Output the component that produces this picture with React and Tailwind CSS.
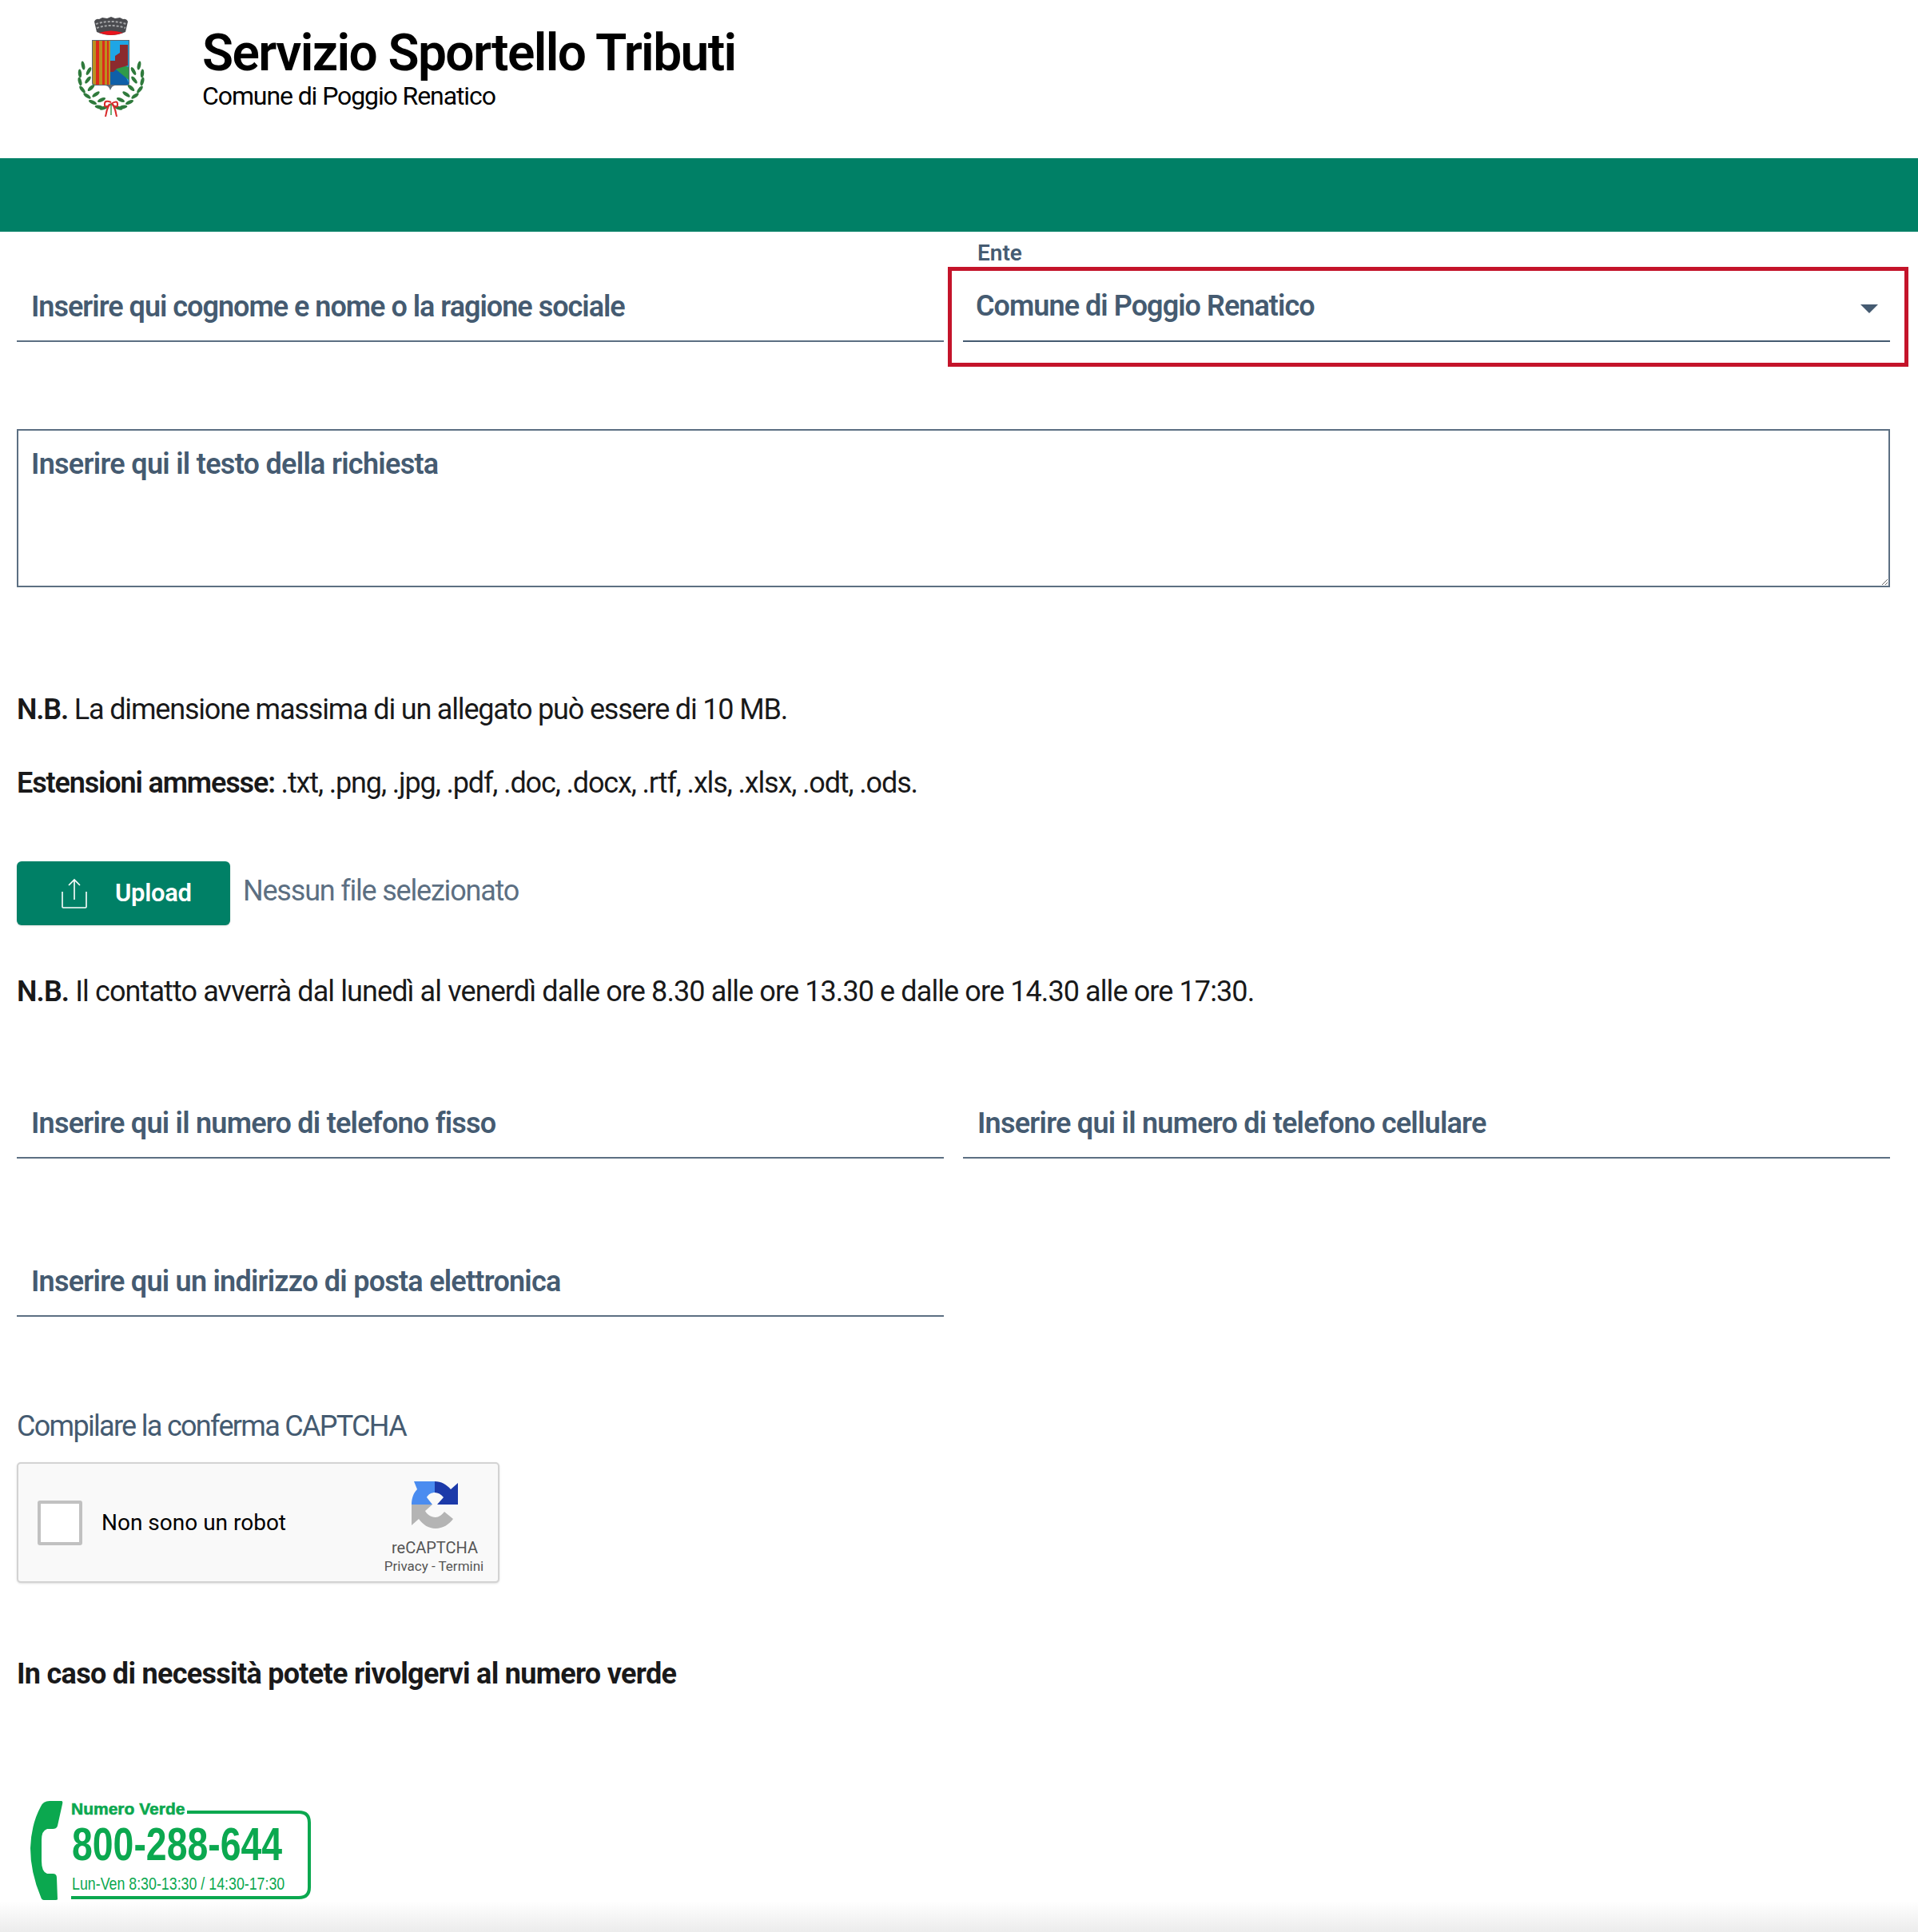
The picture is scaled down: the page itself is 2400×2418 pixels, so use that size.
const fontBody = { fontFamily: "Roboto, sans-serif" };

// leaves of the wreath on the crest, one branch, mirrored for the other side
const leaves = [
  [34, 72, -12], [30, 82, -5], [41, 79, 30], [30, 92, -15], [40, 90, 38], [33, 102, -38], [44, 100, 48],
  [39, 110, -55], [50, 108, 55], [46, 118, -65], [57, 115, 65], [54, 124, -78], [60, 125, 72],
];

const Crest = () => (
  <svg width="130" height="140" viewBox="0 0 130 140" className="shrink-0">
    <path d="M48 17 Q50 13 54 14 L58 12 L64 13 L69 11 L74 13 L80 12 L84 14 Q88 13 90 17 L87 30 Q69 38 51 30 Z" fill="#4a4b4f" />
    <path d="M50 20 Q69 14 88 20 M51 25 Q69 19 87 25" stroke="#a5a6a8" strokeWidth="2" fill="none" strokeDasharray="3 2" />
    <path d="M54 31 Q69 26 84 31 Q69 37 54 31 Z" fill="#e8141c" />
    <path d="M45 40 H92 V94 Q92 97 88 97 H74 Q70 97 68 103 Q66 97 62 97 H49 Q45 97 45 94 Z" fill="#5b6a78" />
    <path d="M46 41 H68 V96 H50 Q46 96 46 93 Z" fill="#b9911f" />
    <path d="M50 41 H54 V96 H50 Z M58 41 H61 V96 H58 Z M64 41 H66 V96 H64 Z" fill="#dc2a1c" />
    <path d="M68 41 H91 V93 Q91 96 87 96 H68 Z" fill="#1fa6e6" />
    <path d="M68 80 Q76 76 82 74 L91 94 V96 H68 Z" fill="#0f5fa8" />
    <path d="M74 76 Q84 70 91 74 V90 Z" fill="#2f9a4a" />
    <path d="M68 66 H74 V60 L80 56 V46 H90 V72 L76 76 L72 80 H68 Z" fill="#8c2a2e" />
    {leaves.map(([x, y, r], i) => (
      <g key={i}>
        <ellipse cx={x} cy={y} rx="2.2" ry="5.5" fill="#2f7a3c" transform={`rotate(${r} ${x} ${y})`} />
        <ellipse cx={138 - x} cy={y} rx="2.2" ry="5.5" fill="#2f7a3c" transform={`rotate(${-r} ${138 - x} ${y})`} />
      </g>
    ))}
    <path d="M69 118 Q60 114 61 122 Q62 126 69 120 Q78 114 77 122 Q76 126 69 120" stroke="#d92b2b" strokeWidth="2" fill="none" />
    <path d="M67 120 Q63 128 62 136 M71 120 Q75 128 76 136" stroke="#d92b2b" strokeWidth="2" fill="none" />
    <path d="M69 120 V134" stroke="#3b9a4f" strokeWidth="1.5" fill="none" />
  </svg>
);

const UploadIcon = () => (
  <svg width="32" height="38" viewBox="0 0 32 38" fill="none" stroke="#fff" strokeWidth="1.6" className="shrink-0">
    <path d="M16 27 V2 M9 9 L16 2 L23 9" />
    <path d="M1 17 V36 Q1 37 2 37 H30 Q31 37 31 36 V17" />
  </svg>
);

const RecaptchaLogo = () => (
  <svg width="59" height="62" viewBox="0 0 59 62">
    <path d="M0 30 L0 56 L9 48 C14 55 21 60 30 60 C39 60 47 55 52 48 L41 39 C38 43 34 46 30 46 C24 46 19 42 17 38 L26 30 Z" fill="#b4b4b4" />
    <path d="M0 30 C0 23 2 16 7 11 L3 1 L29 1 L29 15 C25 15 21 17 19 21 L26 30 Z" fill="#4a8cf0" />
    <path d="M29 1 C37 1 44 5 49 11 L58 3 L58 30 L32 30 L40 21 C37 17 33 15 29 15 Z" fill="#1c3aa9" />
  </svg>
);

const NumeroVerde = () => (
  <svg width="352" height="126" viewBox="0 0 352 126" className="shrink-0">
    <path d="M24 1 H39 Q41 1 40 5 L34 32 Q33 36 28 36 H21 Q14 38 14 50 V76 Q14 90 21 92 H28 Q33 92 33 97 L34 124 Q34 125 30 125 H17 Q14 125 13 121 Q0 90 0 60 Q1 30 13 8 Q16 1 24 1 Z" fill="#0ba84f" />
    <text transform="translate(51 18)" fill="#0ba84f" stroke="#0ba84f" strokeWidth="0.6" fontFamily="'Liberation Sans', sans-serif" fontWeight="700" fontSize="21">Numero Verde</text>
    <path d="M196 15 H336 Q349 15 349 28 V109 Q349 122 336 122 H51" fill="none" stroke="#0ba84f" strokeWidth="4" />
    <text transform="translate(52 75) scale(0.8 1)" fill="#0ba84f" fontFamily="'Liberation Sans', sans-serif" fontWeight="700" fontSize="58">800-288-644</text>
    <text transform="translate(52 112) scale(0.81 1)" fill="#0ba84f" fontFamily="'Liberation Sans', sans-serif" fontSize="22">Lun-Ven 8:30-13:30 / 14:30-17:30</text>
  </svg>
);

const Field = ({ placeholder }) => (
  <input
    type="text"
    placeholder={placeholder}
    className="w-full h-[75px] px-[18px] pb-[12px] border-b-2 border-[#5c6f82] bg-white text-[36px] font-semibold tracking-[-0.75px] outline-0 placeholder:text-[#455b71] placeholder:opacity-100"
  />
);

export default function App() {
  return (
    <div className="w-full bg-white text-[#19191a]" style={fontBody}>
      <header className="h-[198px] flex items-start">
        <div className="pl-[70px] pt-[10px]">
          <Crest />
        </div>
        <div className="pl-[53px] pt-[29px] text-black">
          <h1 className="text-[64px] leading-[76px] font-semibold tracking-[-1.6px]">Servizio Sportello Tributi</h1>
          <p className="text-[32px] leading-[31px] tracking-[-1.1px]">Comune di Poggio Renatico</p>
        </div>
      </header>
      <div className="h-[92px] bg-[#008066]"></div>

      <main className="px-[21px] pr-[35px]">
        <div className="grid grid-cols-2 gap-x-6">
          <div className="pt-[63px]">
            <input
              type="text"
              placeholder="Inserire qui cognome e nome o la ragione sociale"
              className="w-full h-[75px] px-[18px] pb-[12px] border-b-2 border-[#5c6f82] bg-white text-[36px] font-semibold tracking-[-1px] outline-0 placeholder:text-[#455b71] placeholder:opacity-100"
            />
          </div>
          <div>
            <label className="block h-[44px] pl-[18px] pt-[11px] text-[28px] leading-[32px] font-semibold text-[#455b71]">Ente</label>
            <div className="-ml-[19px] -mr-[23px] h-[125px] border-[5px] border-[#c4142a] pl-[14px] pr-[18px]">
              <div className="h-[89px] flex items-center justify-between border-b-2 border-[#455b71] pl-[16px] pr-[15px]">
                <span className="text-[36px] font-semibold tracking-[-0.95px] text-[#455b71]">Comune di Poggio Renatico</span>
                <span className="mt-[8px] w-0 h-0 border-x-[11px] border-x-transparent border-t-[11px] border-t-[#455b71]"></span>
              </div>
            </div>
          </div>
        </div>

        <textarea
          placeholder="Inserire qui il testo della richiesta"
          className="block mt-[78px] w-full h-[198px] px-[16px] py-[15px] border-2 border-[#5c6f82] text-[36px] leading-[54px] font-semibold tracking-[-0.7px] outline-0 placeholder:text-[#455b71] placeholder:opacity-100"
        ></textarea>

        <p className="mt-[126px] text-[36px] leading-[54px] tracking-[-1.18px]"><b className="font-semibold">N.B.</b> La dimensione massima di un allegato può essere di 10 MB.</p>
        <p className="mt-[38px] text-[36px] leading-[54px] tracking-[-1.14px]"><b className="font-semibold">Estensioni ammesse:</b> .txt, .png, .jpg, .pdf, .doc, .docx, .rtf, .xls, .xlsx, .odt, .ods.</p>

        <div className="mt-[71px] flex items-start gap-[16px]">
          <button className="w-[267px] h-[80px] flex items-center pl-[56px] gap-[35px] rounded-[6px] bg-[#008066] text-white text-[31px] font-semibold tracking-[-0.3px] shadow-sm">
            <UploadIcon />
            <span>Upload</span>
          </button>
          <span className="pt-[12px] text-[36px] leading-[50px] text-[#5c6f82] tracking-[-1.2px]">Nessun file selezionato</span>
        </div>

        <p className="mt-[56px] text-[36px] leading-[54px] tracking-[-0.9px]"><b className="font-semibold">N.B.</b> Il contatto avverrà dal lunedì al venerdì dalle ore 8.30 alle ore 13.30 e dalle ore 14.30 alle ore 17:30.</p>

        <div className="mt-[107px] grid grid-cols-2 gap-x-6">
          <Field placeholder="Inserire qui il numero di telefono fisso" />
          <Field placeholder="Inserire qui il numero di telefono cellulare" />
        </div>

        <div className="mt-[123px] grid grid-cols-2 gap-x-6">
          <Field placeholder="Inserire qui un indirizzo di posta elettronica" />
        </div>

        <p className="mt-[110px] text-[36px] leading-[54px] text-[#455b71] tracking-[-1.7px]">Compilare la conferma CAPTCHA</p>

        <div className="mt-[18px] w-[604px] h-[151px] flex items-center justify-between pl-[24px] pr-[19px] border-2 border-[#d3d3d3] rounded-[5px] bg-[#f9f9f9] shadow-sm">
          <div className="flex items-center gap-[24px]">
            <span className="w-[56px] h-[56px] border-[4px] border-[#c1c1c1] rounded-[3px] bg-white"></span>
            <span className="text-[28px] text-black">Non sono un robot</span>
          </div>
          <div className="w-[122px] pt-[12px] flex flex-col items-center">
            <span className="pl-[2px] flex">
              <RecaptchaLogo />
            </span>
            <span className="mt-[10px] pl-[2px] text-[20px] leading-[24px] text-[#555]">reCAPTCHA</span>
            <span className="mt-[1px] text-[17px] leading-[20px] whitespace-nowrap text-[#555]">Privacy - Termini</span>
          </div>
        </div>

        <p className="mt-[87px] text-[36px] leading-[54px] font-bold tracking-[-0.7px]">In caso di necessità potete rivolgervi al numero verde</p>

        <div className="mt-[131px] pl-[17px]">
          <NumeroVerde />
        </div>
      </main>
      <div className="h-[39px] bg-gradient-to-b from-white to-[#ececec]"></div>
    </div>
  );
}
